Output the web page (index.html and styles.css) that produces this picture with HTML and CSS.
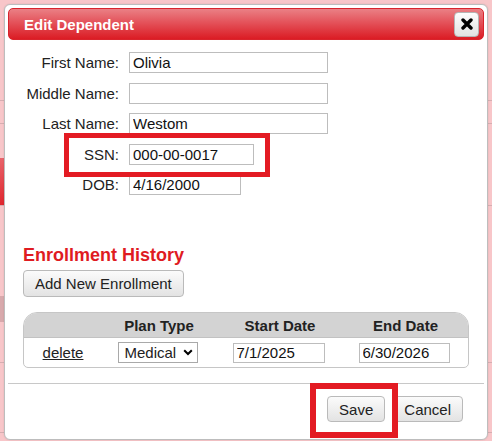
FILE: index.html
```html
<!DOCTYPE html>
<html>
<head>
<meta charset="utf-8">
<title>Edit Dependent</title>
<link rel="stylesheet" href="styles.css">
</head>
<body>
<div class="page">
  <div class="sp sp1"></div>
  <div class="band"></div>
  <div class="sp sp2"></div>
  <div class="tabrow"><div class="tab"></div></div>
  <div class="sp sp3"></div>
  <div class="grayblock"></div>
  <div class="sp sp4"></div>
  <div class="pline"></div>
  <div class="sp sp5"></div>
  <div class="pline"></div>
</div>

<div class="dialog">
  <div class="titlebar">
    <span class="title">Edit Dependent</span>
    <button class="close" type="button" aria-label="Close">
      <svg width="12" height="12" viewBox="0 0 12 12"><path d="M2 2 L10 10 M10 2 L2 10" stroke="#000" stroke-width="3.4" stroke-linecap="round" fill="none"/></svg>
    </button>
  </div>

  <div class="form">
    <label class="lbl">First Name:</label><input class="inp w-long" value="Olivia">
    <label class="lbl">Middle Name:</label><input class="inp w-long" value="">
    <label class="lbl">Last Name:</label><input class="inp w-long" value="Westom">
    <label class="lbl">SSN:</label><input class="inp w-ssn" value="000-00-0017">
    <label class="lbl">DOB:</label><input class="inp w-dob" value="4/16/2000">
  </div>

  <div class="section">
    <h2 class="heading">Enrollment History</h2>
    <button class="btn add" type="button">Add New Enrollment</button>

    <div class="grid">
      <div class="ghead">
        <span></span><span>Plan Type</span><span>Start Date</span><span>End Date</span>
      </div>
      <div class="grow">
        <a class="del" href="#">delete</a>
        <span class="selwrap">
          <select class="sel"><option>Medical</option></select>
          <svg class="chev" width="10" height="7" viewBox="0 0 10 7"><path d="M1.2 1.2 L5 5 L8.8 1.2" stroke="#000" stroke-width="2" fill="none"/></svg>
        </span>
        <input class="inp date d1" value="7/1/2025">
        <input class="inp date d2" value="6/30/2026">
      </div>
    </div>
  </div>

  <div class="footer">
    <button class="btn" type="button">Save</button>
    <button class="btn" type="button">Cancel</button>
  </div>
</div>

<div class="mark mark-ssn"></div>
<div class="mark mark-save"></div>
</body>
</html>
```

FILE: styles.css
```css
* { box-sizing: border-box; }
html, body { margin: 0; padding: 0; }
body {
  width: 492px;
  height: 441px;
  overflow: hidden;
  background: #f8c6c9;
  font-family: "Liberation Sans", Arial, sans-serif;
  color: #222;
  position: relative;
}

/* faint page underneath the overlay */
.page { width: 492px; }
.sp1 { height: 100px; }
.band { height: 24px; border-top: 1px solid #d6aeb1; border-bottom: 1px solid #d6aeb1; }
.sp2 { height: 34px; }
.tabrow { border-bottom: 1px solid #d6aeb1; }
.tab { width: 240px; height: 47px; background: linear-gradient(#e9646b, #e0262e); }
.sp3 { height: 90px; }
.grayblock { width: 240px; height: 26px; background: #d8a9ac; }
.sp4 { height: 40px; }
.pline { height: 1px; background: #d6aeb1; }
.sp5 { height: 69px; }

/* dialog */
.dialog {
  position: absolute;
  left: 4px;
  top: 4px;
  width: 484px;
  height: 436px;
  background: #fff;
  border: 1px solid #bdbdbd;
  border-radius: 6px;
  padding: 3px;
  box-shadow: 0 0 2px rgba(0,0,0,0.12);
}

.titlebar {
  height: 32px;
  display: flex;
  align-items: center;
  justify-content: space-between;
  padding: 0 4px 0 15px;
  border-radius: 5px;
  background: linear-gradient(#ea8085 0%, #e4525a 45%, #db1c24 100%);
  border: 1px solid #d8242c;
}
.title {
  color: #fff;
  font-weight: bold;
  font-size: 15px;
}
.close {
  width: 25px;
  height: 25px;
  padding: 0;
  display: flex;
  align-items: center;
  justify-content: center;
  background: linear-gradient(#fdfdfd, #e2e2e2);
  border: 1px solid #b5b5b5;
  border-radius: 4px;
}

.form {
  margin-top: 12px;
  display: grid;
  grid-template-columns: 111px auto;
  column-gap: 10px;
  row-gap: 9.5px;
  align-items: center;
  justify-items: start;
}
.lbl {
  justify-self: end;
  font-size: 15px;
  color: #222;
  line-height: 21px;
}
.inp {
  height: 21px;
  border: 1px solid #bdbdbd;
  border-radius: 0;
  padding: 0 3px;
  font-family: "Liberation Sans", Arial, sans-serif;
  font-size: 15px;
  color: #111;
  background: #fff;
  outline: none;
}
.w-long { width: 199px; }
.w-ssn { width: 125px; }
.w-dob { width: 112px; }

.section { padding: 0 15px; }
.heading {
  margin: 50px 0 0;
  font-size: 18px;
  line-height: 20px;
  font-weight: bold;
  color: #df1b22;
}
.btn {
  height: 26px;
  padding: 0 11px;
  font-family: "Liberation Sans", Arial, sans-serif;
  font-size: 15px;
  color: #222;
  background: linear-gradient(#fbfbfb, #e3e3e3);
  border: 1px solid #bababa;
  border-radius: 4px;
}
.add {
  margin-top: 5px;
  height: 27px;
  display: block;
}

.grid {
  margin-top: 15px;
  border: 1px solid #c6c6c6;
  border-radius: 14px 14px 5px 5px;
  overflow: hidden;
}
.ghead, .grow {
  display: grid;
  grid-template-columns: 78px 114px 128px 123px;
  align-items: center;
  justify-items: center;
}
.ghead {
  height: 25px;
  background: #d3d3d3;
  border-bottom: 1px solid #c2c2c2;
  font-weight: bold;
  font-size: 15px;
  color: #222;
}
.grow { height: 29px; }
.del {
  color: #222;
  font-size: 15px;
  text-decoration: underline;
}
.selwrap {
  position: relative;
  display: block;
  width: 80px;
  height: 21px;
  margin-left: -3px;
}
.sel {
  appearance: none;
  -webkit-appearance: none;
  display: block;
  width: 80px;
  height: 21px;
  border: 1px solid #a9a9a9;
  border-radius: 0;
  padding: 0 0 0 6px;
  font-family: "Liberation Sans", Arial, sans-serif;
  font-size: 15px;
  color: #222;
  background: #fff;
}
.chev {
  position: absolute;
  right: 5px;
  top: 7px;
  pointer-events: none;
}
.date { height: 20px; font-size: 15px; }
.d1 { width: 92px; margin-left: -3px; }
.d2 { width: 91px; margin-right: 3px; }

.footer {
  margin-top: 15px;
  border-top: 1px solid #c8c8c8;
  padding: 12px 21px 0 0;
  display: flex;
  justify-content: flex-end;
  gap: 7px;
}

/* annotation boxes */
.mark {
  position: absolute;
  border: 5px solid #e31b23;
}
.mark-ssn { left: 64px; top: 133px; width: 206px; height: 44px; }
.mark-save { left: 310px; top: 383px; width: 88px; height: 55px; border-width: 6px; }
```
